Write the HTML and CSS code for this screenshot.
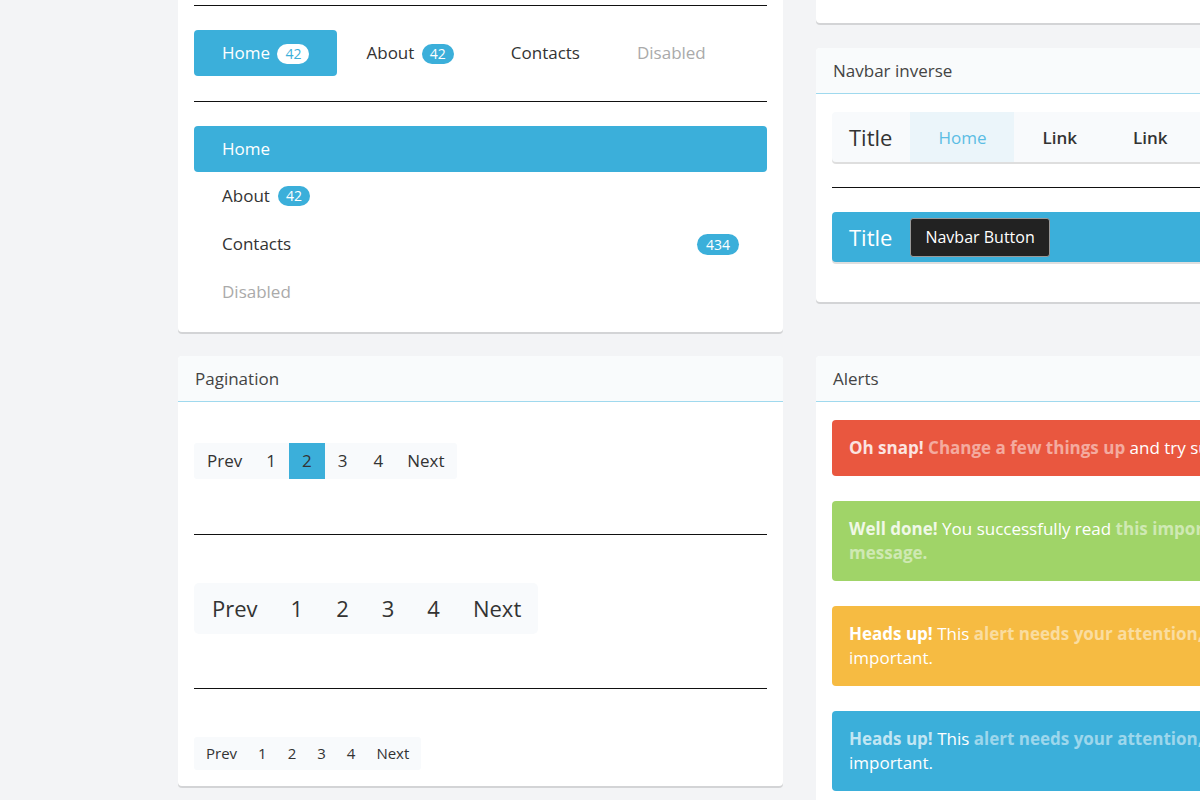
FILE: index.html
```html
<!DOCTYPE html>
<html lang="en">
<head>
    <meta charset="UTF-8">
    <meta name="viewport" content="width=device-width, initial-scale=1.0">
    <title>UI Components</title>
    <link rel="stylesheet" href="styles.css">
</head>
<body>
    <div class="layout">
        <!-- left column, first row -->
        <div class="stack">
            <div class="card">
                <div class="card-header">Navs</div>
                <div class="card-body">
                    <hr class="rule">
                    <ul class="nav-pills">
                        <li class="active"><a href="#">Home <span class="badge">42</span></a></li>
                        <li><a href="#">About <span class="badge">42</span></a></li>
                        <li><a href="#">Contacts</a></li>
                        <li class="disabled"><a href="#">Disabled</a></li>
                    </ul>
                    <hr class="rule">
                    <ul class="nav-stacked">
                        <li class="active"><a href="#">Home</a></li>
                        <li><a href="#">About <span class="badge">42</span></a></li>
                        <li><a href="#">Contacts <span class="badge badge-right">434</span></a></li>
                        <li class="disabled"><a href="#">Disabled</a></li>
                    </ul>
                </div>
            </div>
        </div>

        <!-- right column, first row -->
        <div class="stack">
            <div class="card">
                <div class="card-header">Navbar</div>
                <div class="card-body card-body-short"></div>
            </div>
            <div class="card">
                <div class="card-header">Navbar inverse</div>
                <div class="card-body card-body-navbars">
                    <nav class="navbar">
                        <span class="navbar-brand">Title</span>
                        <ul class="navbar-nav">
                            <li class="active"><a href="#">Home</a></li>
                            <li><a href="#">Link</a></li>
                            <li><a href="#">Link</a></li>
                        </ul>
                    </nav>
                    <hr class="rule">
                    <nav class="navbar navbar-inverse">
                        <span class="navbar-brand">Title</span>
                        <button class="navbar-btn">Navbar Button</button>
                    </nav>
                </div>
            </div>
        </div>

        <!-- second row -->
        <div class="stack">
            <div class="card">
                <div class="card-header">Pagination</div>
                <div class="card-body">
                    <ul class="pagination">
                        <li><a href="#">Prev</a></li>
                        <li><a href="#">1</a></li>
                        <li class="active"><a href="#">2</a></li>
                        <li><a href="#">3</a></li>
                        <li><a href="#">4</a></li>
                        <li><a href="#">Next</a></li>
                    </ul>
                    <hr class="rule">
                    <ul class="pagination pagination-lg">
                        <li><a href="#">Prev</a></li>
                        <li><a href="#">1</a></li>
                        <li><a href="#">2</a></li>
                        <li><a href="#">3</a></li>
                        <li><a href="#">4</a></li>
                        <li><a href="#">Next</a></li>
                    </ul>
                    <hr class="rule">
                    <ul class="pagination pagination-sm">
                        <li><a href="#">Prev</a></li>
                        <li><a href="#">1</a></li>
                        <li><a href="#">2</a></li>
                        <li><a href="#">3</a></li>
                        <li><a href="#">4</a></li>
                        <li><a href="#">Next</a></li>
                    </ul>
                </div>
            </div>
        </div>

        <div class="stack">
            <div class="card">
                <div class="card-header">Alerts</div>
                <div class="card-body">
                    <div class="alert alert-danger">
                        <strong>Oh snap!</strong> <a href="#">Change a few things up</a> and try submitting again.
                    </div>
                    <div class="alert alert-success">
                        <strong>Well done!</strong> You successfully read <a href="#">this important alert message.</a>
                    </div>
                    <div class="alert alert-warning">
                        <strong>Heads up!</strong> This <a href="#">alert needs your attention, but it's not super</a> important.
                    </div>
                    <div class="alert alert-info">
                        <strong>Heads up!</strong> This <a href="#">alert needs your attention, but it's not super</a> important.
                    </div>
                </div>
            </div>
        </div>
    </div>
</body>
</html>
```

FILE: styles.css
```css
body {
    margin: 0;
    font-family: "Open Sans", Arial, sans-serif;
    font-size: 17px;
    color: #333;
    background-color: #f3f4f6;
    overflow-x: hidden;
}

a {
    text-decoration: none;
    color: inherit;
}

ul {
    list-style: none;
    margin: 0;
    padding: 0;
}

/* page is shown scrolled a little way down */
.layout {
    display: grid;
    grid-template-columns: 605px 577px;
    column-gap: 33px;
    row-gap: 24px;
    align-items: start;
    margin-top: -82px;
    padding-left: 178px;
}

.stack {
    display: flex;
    flex-direction: column;
    gap: 25px;
}

.card {
    background-color: #fff;
    border-radius: 4px;
    box-shadow: 0 2px 0 rgba(0, 0, 0, 0.13);
}

.card-header {
    padding: 12px 17px;
    line-height: 21px;
    color: #444;
    background-color: #f9fbfc;
    border-bottom: 1px solid #9fd9ee;
    border-radius: 4px 4px 0 0;
}

.card-body {
    display: flex;
    flex-direction: column;
    padding: 16px;
}

.card-body-short {
    height: 59px;
    padding: 0;
}

.card-body-navbars {
    padding: 18px 16px 40px;
}

.rule {
    width: 100%;
    height: 0;
    margin: 25px 0 24px;
    border: 0;
    border-top: 1px solid #111;
}

/* badges */
.badge {
    display: inline-block;
    min-width: 16px;
    padding: 0 8px;
    margin-left: 8px;
    font-size: 14px;
    line-height: 20px;
    text-align: center;
    color: #fff;
    background-color: #3bafda;
    border-radius: 10px;
}

.badge-right {
    margin-left: auto;
    padding: 0 9px;
    line-height: 21px;
    border-radius: 11px;
}

/* pills */
.nav-pills {
    display: flex;
}

.nav-pills li a {
    display: block;
    padding: 12px 28px;
    line-height: 21px;
    border-radius: 4px;
    color: #333;
}

.nav-pills li + li {
    margin-left: 1px;
}

.nav-pills .badge {
    margin-left: 3px;
}

.nav-pills .active a {
    color: #fff;
    background-color: #3bafda;
}

.nav-pills .active .badge {
    color: #3bafda;
    background-color: #fff;
}

.nav-pills .disabled a,
.nav-stacked .disabled a {
    color: #aaa;
}

/* stacked list */
.nav-stacked li a {
    display: flex;
    align-items: center;
    padding: 12px 28px;
    line-height: 24px;
    color: #333;
}

.nav-stacked .active a {
    padding: 11px 28px;
    color: #fff;
    background-color: #3bafda;
    border-radius: 4px;
}

/* pagination */
.pagination {
    display: flex;
    align-self: flex-start;
    margin: 25px 0 30px;
    background-color: #f8fafc;
    border-radius: 3px;
}

.pagination li a {
    display: block;
    padding: 0 13px;
    line-height: 36px;
    color: #333;
}

.pagination li:first-child a {
    padding: 0 11px 0 13px;
}

.pagination li:last-child a {
    padding: 0 13px 0 11px;
}

.pagination .active a {
    background-color: #3bafda;
}

.pagination-lg {
    margin: 24px 0 29px;
    border-radius: 5px;
}

.pagination-lg li a {
    padding: 0 16.5px;
    font-size: 22px;
    line-height: 51px;
}

.pagination-lg li:first-child a {
    padding: 0 16.5px 0 18px;
}

.pagination-lg li:last-child a {
    padding: 0 17px 0 16.5px;
}

.pagination-sm {
    margin: 24px 0 0;
}

.pagination-sm li a {
    padding: 0 10.5px;
    font-size: 15px;
    line-height: 33px;
}

.pagination-sm li:first-child a {
    padding: 0 10.5px 0 12px;
}

.pagination-sm li:last-child a {
    padding: 0 12px 0 10.5px;
}

/* navbars */
.navbar {
    display: flex;
    align-items: center;
    height: 50px;
    background-color: #f8fafc;
    border-radius: 4px;
    box-shadow: 0 2px 0 rgba(0, 0, 0, 0.13);
}

.navbar-brand {
    padding: 0 18px 0 17px;
    font-size: 22px;
    color: #333;
}

.navbar-nav {
    display: flex;
    align-self: stretch;
}

.navbar-nav li a {
    display: flex;
    align-items: center;
    height: 100%;
    padding: 0 28px;
    font-weight: 600;
    color: #333;
}

.navbar-nav .active a {
    font-weight: 400;
    color: #5bbde4;
    background-color: #ebf5fa;
}

.navbar-inverse {
    background-color: #3bafda;
}

.navbar-inverse .navbar-brand {
    color: #fff;
}

.navbar-btn {
    padding: 0 14px;
    height: 39px;
    font-family: "Open Sans", Arial, sans-serif;
    font-size: 16px;
    color: #fff;
    background-color: #222;
    border: 1px solid #999;
    border-radius: 3px;
}

/* alerts */
.alert {
    padding: 16px 17px;
    margin-bottom: 25px;
    line-height: 24px;
    color: #fff;
    border-radius: 4px;
}

.alert strong {
    font-weight: 700;
}

.alert a {
    font-weight: 700;
    color: rgba(255, 255, 255, 0.5);
}

.alert-danger {
    margin-top: 2px;
    background-color: #e9573f;
}

.alert-danger strong {
    color: rgba(255, 255, 255, 0.85);
}

.alert-success {
    background-color: #a0d468;
}

.alert-success strong {
    color: rgba(255, 255, 255, 0.85);
}

.alert-warning {
    background-color: #f6bb42;
}

.alert-info {
    background-color: #3bafda;
}

.alert-info strong {
    color: rgba(255, 255, 255, 0.7);
}
```
